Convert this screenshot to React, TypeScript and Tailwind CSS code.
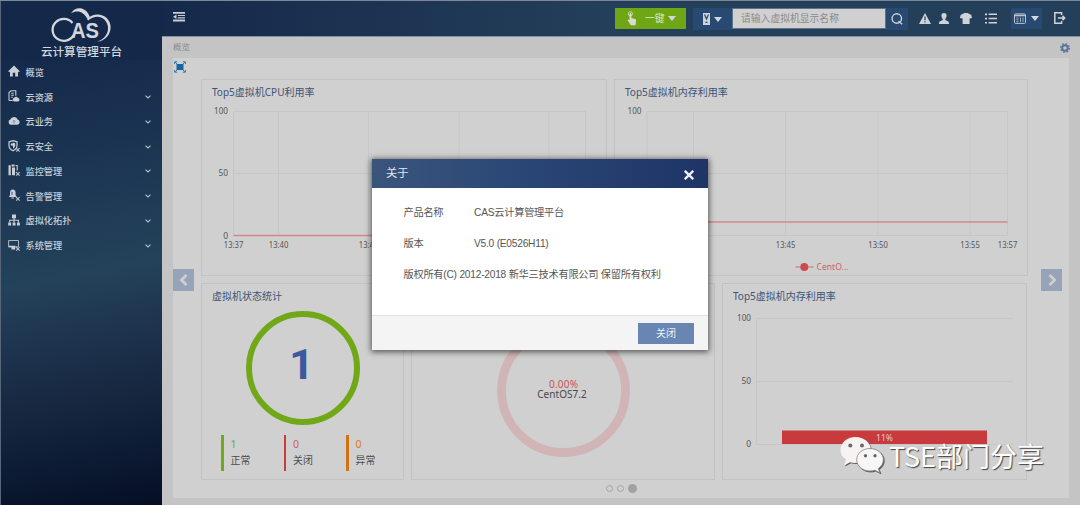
import type { ReactNode } from 'react';

const menuItems = [
  { label: '概览', icon: 'home', expandable: false },
  { label: '云资源', icon: 'resource', expandable: true },
  { label: '云业务', icon: 'cloud', expandable: true },
  { label: '云安全', icon: 'shield', expandable: true },
  { label: '监控管理', icon: 'monitor', expandable: true },
  { label: '告警管理', icon: 'alarm', expandable: true },
  { label: '虚拟化拓扑', icon: 'topology', expandable: true },
  { label: '系统管理', icon: 'system', expandable: true },
];

const vmStates = [
  { label: '正常', count: 1, bar: 'bg-[#70a818]', text: 'text-[#74ab20]' },
  { label: '关闭', count: 0, bar: 'bg-[#c83c3e]', text: 'text-[#cf5a5c]' },
  { label: '异常', count: 0, bar: 'bg-[#d07216]', text: 'text-[#d67c22]' },
];

const wrench = <path d="M8 8l3.6 3.6M11.6 8.2L8.2 11.6" stroke="#b9c2cc" strokeWidth="1.1" fill="none" />;

const menuIcons: Record<string, ReactNode> = {
  home: <path d="M6 .5L.2 6.2l1 1 .8-.7V11.600h2.800V7.800h2.400v3.800H10V6.500l.8.7 1-1z" />,
  resource: (
    <>
      <path d="M1 10.500V2.500L3 .8h4.800v5M3.200 3.200h2.600M3.200 5.200h2.600M3.200 7.200h1.600M1 10.500h3.600" fill="none" stroke="#c6cdd5" strokeWidth="1.100" />
      <path d="M6 11.400a1.700 1.700 0 0 1 0-3.300 2.200 2.200 0 0 1 4-.2 1.800 1.800 0 0 1 .3 3.500z" />
    </>
  ),
  cloud: (
    <>
      <path d="M3 9.800A2.700 2.700 0 0 1 2.300 4.600 3.900 3.900 0 0 1 9.600 4.400 2.750 2.750 0 0 1 9.300 9.800z" />
      <path d="M6 8.800V5.500M4.700 6.700L6 5.400l1.300 1.300" stroke="#7d8c9d" strokeWidth=".9" fill="none" />
    </>
  ),
  shield: (
    <>
      <path d="M1 1.800L5 .7l4 1.100v4c0 2.400-1.800 4-4 5-2.200-1-4-2.600-4-5z" fill="none" stroke="#c6cdd5" strokeWidth="1.200" />
      <path d="M5 2.600l2.200.8v2.200C7.200 7 6.200 8 5 8.800z" />
      <circle cx="4" cy="4.500" r="1.300" />
      {wrench}
    </>
  ),
  monitor: (
    <>
      <path d="M.5 1.200h2.300v10H.5zM4 3.500h3v7.700H4zM3.600.5h3v1.900h-3z" />
      <path d="M7.600 1.500h1.600v5" fill="none" stroke="#c6cdd5" strokeWidth="1.100" />
      {wrench}
    </>
  ),
  alarm: (
    <>
      <path d="M4.800.6c2 0 2.800 1.500 2.800 3.300v2.300L8.800 8H.8L2 6.200V3.900C2 2.100 2.800.6 4.800.6zM3.400 8.600h2.600v1H3.400z" />
      <path d="M4 2.800v3" stroke="#1c3654" strokeWidth=".8" />
      {wrench}
    </>
  ),
  topology: (
    <>
      <path d="M4 .4h4v3.800H4zM.2 8.400h2.900v3.200H.2zM4.600 8.400h2.900v3.200H4.600zM9 8.400h2.900v3.200H9z" />
      <path d="M6 4v4.500M1.700 8.500V6.200h8.700v2.300" fill="none" stroke="#c6cdd5" strokeWidth="1.100" />
    </>
  ),
  system: (
    <>
      <path d="M.6 1.500h9.900v6.300H.6z" fill="none" stroke="#aab5c1" strokeWidth="1" />
      <path d="M.6 6.800h6.600v1.400H.6zM3.500 8.200h3.700v2.300H3.500z" />
      {wrench}
    </>
  ),
};

function Logo() {
  return (
    <div className="flex h-[59px] flex-col items-center bg-[#14294a]">
      <svg width="162" height="44" viewBox="1 1 162 44" className="block shrink-0" fill="#d3d7dc">
        <path d="M72.500 23A11.200 10.900 0 1 0 73.500 35.300" fill="none" stroke="#d3d7dc" strokeWidth="2.300" />
        <path d="M71 13.300C75 6.500 85.500 5.500 90 17.200L87.200 18.800C84 12 77.500 9.600 71 13.300z" />
        <path d="M86.800 19C97 9.500 110.500 16 110.600 27C110.700 35 105 41 97 41.600C104 39.500 108.300 34 108 27.500C107.500 18 97 12.500 88.300 20.500z" />
        <text x="71" y="37.500" fontFamily="Liberation Sans, Arial, sans-serif" fontSize="21.500" fontWeight="700" textLength="28" lengthAdjust="spacingAndGlyphs">
          AS
        </text>
      </svg>
      <div className="text-[11.600px] leading-[13px] font-medium whitespace-nowrap text-[#d3d7dc]">云计算管理平台</div>
    </div>
  );
}

function Sidebar() {
  return (
    <aside className="flex w-[162px] shrink-0 flex-col border-l border-[#56677b] bg-[linear-gradient(169deg,#15294a_10%,#1a3351_30%,#24425a_54%,#1e334e_66%,#16273f_78%,#0d1c35_88%,#050e24_100%)]">
      <Logo />
      <nav className="flex flex-col">
        {menuItems.map((item) => (
          <div key={item.label} className="flex h-[24.750px] items-center pr-[11px] pl-[7px] text-[#c8ced6]">
            <svg width="12" height="12" viewBox="0 0 12 12" fill="#c9cfd6" className="mb-[2px] shrink-0">
              {menuIcons[item.icon]}
            </svg>
            <span className="ml-[5.500px] flex-1 text-[9.200px] leading-none font-medium">{item.label}</span>
            {item.expandable && (
              <svg width="6" height="4" viewBox="0 0 6 4" fill="none" stroke="#b5bfc9" strokeWidth="1.100">
                <path d="M.5.7L3 3 5.500.7" />
              </svg>
            )}
          </div>
        ))}
      </nav>
    </aside>
  );
}

function Caret() {
  return (
    <svg width="8" height="5" viewBox="0 0 8 5" fill="#d3d7dc">
      <path d="M0 0h8L4 5z" />
    </svg>
  );
}

function Header() {
  return (
    <header className="flex h-[36px] shrink-0 items-start border-b border-[#84919e] bg-[linear-gradient(90deg,#15294a,#1c3452_25%,#243f59_48%,#243f59)] pt-[7px] pl-[11px]">
      <svg width="12" height="10" viewBox="0 0 12 10" fill="#c5ccd4" className="mt-[4px]">
        <path d="M0 0h12v1.800H0zM4.800 2.900H12v1.200H4.800zM4.800 5.200H12v1.200H4.800zM0 7.600h12v1.800H0zM0 4.700l3.500-2.300v4.600z" />
      </svg>
      <button className="ml-[430px] flex h-[21px] w-[71px] items-center bg-[#6fa616] pl-[12px] text-[9.800px] text-[#dbe6c8]">
        <svg width="10" height="15" viewBox="0 0 10 15" fill="#d8dccf">
          <circle cx="3.400" cy="2.800" r="2.100" fill="none" stroke="#c8d8a4" strokeWidth="1" />
          <path d="M2.500 3c0-1.200 1.900-1.200 1.900 0v4l3.600 1c.9.3 1.200.8 1.100 1.700l-.6 4.600H3.800L1 9.800c-.6-1 .6-1.600 1.500-.7z" />
        </svg>
        <span className="mr-[3px] ml-[8px] leading-none">一键</span>
        <Caret />
      </button>
      <button className="ml-[7px] flex h-[22px] w-[39px] items-center gap-[4px] bg-[#284972] pl-[10px]">
        <svg width="7" height="12" viewBox="0 0 7 12">
          <path d="M0 0h7v12H0z" fill="#ced3d9" />
          <path d="M1.500 1.500L3.500 6l2-4.500M3.500 5.500v1.500M2.500 9.300h2" fill="none" stroke="#284972" strokeWidth="1.200" />
        </svg>
        <Caret />
      </button>
      <div className="flex h-[21px] w-[154px] items-center border border-[#5c738d] bg-[#d0d0d0] pl-[8px] text-[9.800px] leading-none text-[#8b8b8b]">
        请输入虚拟机显示名称
      </div>
      <button className="flex h-[22px] w-[22px] items-center justify-center bg-[#284972]">
        <svg width="12" height="12" viewBox="0 0 12 12" fill="none" stroke="#ced3d9" strokeWidth="1.400">
          <circle cx="5.800" cy="5.500" r="4.700" />
          <path d="M7.300 8.300l3.900 2.900" />
        </svg>
      </button>
      <div className="-mt-px flex h-[22px] items-center text-[#ced3d9]">
        <svg width="12" height="11" viewBox="0 0 12 11" className="ml-[11px]" fill="currentColor">
          <path d="M6 0l6 11H0z" />
          <path d="M6 3.600v3.700M6 8.300v1.300" stroke="#243f59" strokeWidth="1.200" />
        </svg>
        <svg width="10" height="11" viewBox="0 0 10 11" className="ml-[8px]" fill="currentColor">
          <path d="M5 0c1.800 0 2.700 1.200 2.600 2.800-.1 1.400-.6 2.500-1.300 3.100v1L9.400 8.500c.5.300.6 1.500.6 2.500H0C0 10 .1 8.800.6 8.500l3.100-1.600v-1C3 5.300 2.500 4.200 2.400 2.800 2.300 1.200 3.200 0 5 0z" />
        </svg>
        <svg width="12" height="11" viewBox="0 0 12 11" className="ml-[11px]" fill="currentColor">
          <path d="M3.400.4C4.500 0 7.500 0 8.600.4l2.700 1.700.7 2.800-2.400.6v5.500H2.600V5.500L0 4.900l.6-2.800z" />
        </svg>
        <svg width="12" height="11" viewBox="0 0 12 11" className="ml-[13px]" fill="currentColor">
          <path d="M0 .5h2v1.700H0zM3.600.5H12v1.500H3.600zM0 4.700h2v1.700H0zM3.600 4.700H12v1.500H3.600zM0 8.900h2v1.700H0zM3.600 8.900H12v1.500H3.600z" />
        </svg>
        <button className="mt-px ml-[14px] flex h-[21px] w-[31px] items-center gap-[5px] self-start rounded-[1px] bg-[#284972] pl-[3px]">
          <svg width="12" height="11" viewBox="0 0 12 11" fill="none" stroke="#b9c3cf">
            <rect x=".5" y=".9" width="11" height="9.500" rx="1" />
            <path d="M1 2.500h10" strokeWidth="1.600" />
            <path d="M2.300 5h2.200M2.300 6.800h2.200M2.300 8.600h2.200M6.500 4.500V9M9 4.500V9" strokeWidth=".8" />
          </svg>
          <Caret />
        </button>
        <svg width="12" height="12" viewBox="0 0 12 12" className="ml-[12px]" fill="none" stroke="currentColor" strokeWidth="1.500">
          <path d="M7.600 3V.8H.8v10.400h6.800V9M4 6h6.500M8.500 3.900L10.700 6 8.500 8.100" />
        </svg>
      </div>
    </header>
  );
}

function Card({ title, className, children }: { title?: string; className: string; children?: ReactNode }) {
  return (
    <section className={`flex shrink-0 flex-col overflow-hidden border border-[#c3c3c3] ${className}`}>
      <h3 className="h-[24px] shrink-0 pl-[10px] text-[10px] leading-[24px] whitespace-nowrap text-[#3d5475]">{title}</h3>
      {children}
    </section>
  );
}

type LineChartProps = {
  left: number;
  right: number;
  ticks: { x: number; label: string }[];
  lineY: number;
  children?: ReactNode;
};

function LineChart({ left, right, ticks, lineY, children }: LineChartProps) {
  return (
    <svg width="412" height="170" viewBox="0 0 412 170" className="block shrink-0" fontFamily="Noto Sans, sans-serif" fontSize="8.500">
      <g stroke="#c6c6c6" strokeWidth="1">
        {[7.5, 69.500, 131.500].map((y) => (
          <path key={y} d={`M${left} ${y}H${right}`} />
        ))}
        {ticks.map((t) => (
          <path key={t.x} d={`M${t.x} 7.500V131.500`} />
        ))}
      </g>
      <g fill="#565656">
        <text x={left - 19.500} y="10" textLength="14" lengthAdjust="spacingAndGlyphs">100</text>
        <text x={left - 15} y="72" textLength="9.500" lengthAdjust="spacingAndGlyphs">50</text>
        <text x={left - 10.300} y="134.500">0</text>
      </g>
      <g fill="#565656">
        {ticks.filter((t) => t.label).map((t) => (
          <text key={t.x} x={t.x - 9.700} y="144" textLength="19.500" lengthAdjust="spacingAndGlyphs">
            {t.label}
          </text>
        ))}
      </g>
      <rect x={left} y={lineY - 0.7} width={right - left} height="1.400" fill="#d98283" />
      {children}
    </svg>
  );
}

const cpuTicks = [
  { x: 31.500, label: '13:37' },
  { x: 76.500, label: '13:40' },
  { x: 166.500, label: '13:45' },
  { x: 257, label: '' },
  { x: 347, label: '' },
  { x: 383.500, label: '' },
];

const memoryTicks = [
  { x: 32, label: '' },
  { x: 78.500, label: '' },
  { x: 170.500, label: '13:45' },
  { x: 263, label: '13:50' },
  { x: 355, label: '13:55' },
  { x: 392.500, label: '13:57' },
];

function VmStates() {
  return (
    <>
      <div className="mt-[3px] ml-[43.500px] flex h-[114px] w-[114px] shrink-0 items-center justify-center rounded-full border-[6.500px] border-[#70a818] pb-[8px] font-['Roboto',sans-serif] text-[43px] leading-none font-bold text-[#3a5a9d]">
        <span className="-ml-[2px]">1</span>
      </div>
      <div className="mt-[10px] ml-[19px] flex">
        {vmStates.map((s) => (
          <div key={s.label} className="flex w-[62.500px] shrink-0 gap-[7px]">
            <div className={`h-[36px] w-[2.500px] ${s.bar}`} />
            <div className="pt-[2px]">
              <div className={`text-[10.500px] leading-[14px] ${s.text}`}>{s.count}</div>
              <div className="text-[9.900px] leading-[18px] text-[#4c4c4c]">{s.label}</div>
            </div>
          </div>
        ))}
      </div>
    </>
  );
}

function Arrow({ direction }: { direction: 'left' | 'right' }) {
  return (
    <button className="flex h-[22px] w-[21px] items-center justify-center bg-[#96a3b8]">
      <svg width="10" height="12" viewBox="0 0 10 12" fill="none" stroke="#cfcfcf" strokeWidth="2.800">
        <path d={direction === 'left' ? 'M7.500 1L2.500 6l5 5' : 'M2.500 1l5 5-5 5'} />
      </svg>
    </button>
  );
}

function Dashboard() {
  return (
    <div className="mr-[11px] ml-[11px] flex h-[440px] shrink-0 bg-[#d0d0d0]">
      <div className="flex w-[28px] shrink-0 flex-col">
        <svg width="12" height="12" viewBox="0 0 12 12" className="mt-[3px] ml-[1px]" fill="#1466a0">
          <path d="M2.500 3h7v6h-7z" />
          <path d="M.6 3V.8h2.600M8.800.8h2.600V3M11.400 9v2.200H8.800M3.200 11.200H.6V9M1 1l2 2M11 1L9 3M1 11l2-2M11 11L9 9" fill="none" stroke="#2f7db2" strokeWidth="1" />
        </svg>
        <div className="mt-[196px]">
          <Arrow direction="left" />
        </div>
      </div>
      <div className="flex w-[827px] shrink-0 flex-col pt-[21px]">
        <div className="flex gap-[7px]">
          <Card title="Top5虚拟机CPU利用率" className="h-[197px] w-[406px]">
            <LineChart left={31.500} right={383.500} ticks={cpuTicks} lineY={131.500} />
          </Card>
          <Card title="Top5虚拟机内存利用率" className="h-[197px] w-[414px]">
            <LineChart left={32} right={392.500} ticks={memoryTicks} lineY={118}>
              <path d="M180.500 163h18" stroke="#d06a6b" strokeWidth="1" />
              <circle cx="189.300" cy="163" r="4" fill="#cb4c4e" />
              <text x="201.500" y="165.500" fill="#cf6163" textLength="32">CentO...</text>
            </LineChart>
          </Card>
        </div>
        <div className="mt-[7px] flex gap-[7px]">
          <Card title="虚拟机状态统计" className="h-[197px] w-[203px]">
            <VmStates />
          </Card>
          <Card className="h-[197px] w-[304px]">
            <svg width="302" height="171" viewBox="0 0 302 171" className="block shrink-0" fontFamily="Noto Sans, sans-serif" textAnchor="middle">
              <circle cx="151.500" cy="82.500" r="62" fill="none" stroke="#d1b5b6" strokeWidth="8.800" />
              <text x="151.500" y="79.500" fontSize="10" fill="#cb5456" textLength="29">0.00%</text>
              <text x="150" y="89.500" fontSize="10" fill="#484848" textLength="49.500">CentOS7.2</text>
            </svg>
          </Card>
          <Card title="Top5虚拟机内存利用率" className="h-[197px] w-[305px]">
            <svg width="303" height="171" viewBox="0 0 303 171" className="block shrink-0" fontFamily="Noto Sans, sans-serif" fontSize="8.500" fill="#565656">
              <path d="M33.500 10.500H290M33.500 73.500H290M33.500 136.500H290M33.500 10.500V136.500" fill="none" stroke="#c6c6c6" />
              <text x="14" y="13" textLength="14" lengthAdjust="spacingAndGlyphs">100</text>
              <text x="18.500" y="76" textLength="9.500" lengthAdjust="spacingAndGlyphs">50</text>
              <text x="23.200" y="139">0</text>
              <path d="M59 122.500h205V136H59z" fill="#c83a3b" />
              <text x="153" y="133" fill="#e2cccc" textLength="17" lengthAdjust="spacingAndGlyphs">11%</text>
            </svg>
          </Card>
        </div>
        <div className="mt-[4px] ml-[405px] flex items-center gap-[4px]">
          <i className="block size-[7px] rounded-full border-[1.500px] border-[#a5a5a5]" />
          <i className="block size-[7px] rounded-full border-[1.500px] border-[#a5a5a5]" />
          <i className="block size-[9px] rounded-full bg-[#a2a2a2]" />
        </div>
      </div>
      <div className="pt-[211px] pl-[13px]">
        <Arrow direction="right" />
      </div>
    </div>
  );
}

function AboutDialog() {
  return (
    <div className="absolute top-[158px] left-[372px] flex h-[191px] w-[336px] flex-col bg-white shadow-[0_1px_6px_1px_rgba(0,0,0,0.6)]">
      <div className="flex h-[29px] shrink-0 items-center justify-between bg-[linear-gradient(90deg,#3a557c,#2a4675_45%,#1e3566)] pr-[14px] pl-[14px] text-[11.300px] text-[#e4e8ee]">
        <span>关于</span>
        <svg width="10" height="10" viewBox="0 0 10 10" stroke="#eef0f4" strokeWidth="2.300" className="mt-[3px]">
          <path d="M.8.8l8.400 8.400M9.200.8L.8 9.200" />
        </svg>
      </div>
      <div className="flex flex-1 flex-col gap-[17px] pt-[18px] pl-[31.500px] font-['Liberation_Sans','Noto_Sans_CJK_SC',sans-serif] text-[10.200px] leading-[14px] tracking-[-0.230px] whitespace-nowrap text-[#555]">
        <div className="flex">
          <span className="w-[70.500px]">产品名称</span>
          <span>CAS云计算管理平台</span>
        </div>
        <div className="flex">
          <span className="w-[70.500px]">版本</span>
          <span>V5.0 (E0526H11)</span>
        </div>
        <div>版权所有(C) 2012-2018 新华三技术有限公司 保留所有权利</div>
      </div>
      <div className="flex h-[35px] shrink-0 items-center justify-end border-t border-[#dfe1ea] bg-[#f4f4f4] pr-[14px]">
        <button className="h-[21px] w-[56px] bg-[#6986b3] text-[10px] leading-none text-[#edf1f6]">关闭</button>
      </div>
    </div>
  );
}

function Watermark() {
  return (
    <div className="absolute top-[433px] left-[838px] flex">
      <svg width="51" height="42" viewBox="0 0 51 42" className="drop-shadow-[1px_1px_0.5px_rgba(60,60,60,0.8)]">
        <path d="M17.500 3C9 3 2.500 8.700 2.500 16c0 4 2 7.500 5.300 10l-1.700 5.500 6-3.300c1.700.5 3.500.8 5.400.8C26 29 33 23.300 33 16S26 3 17.500 3z" fill="#f8f3f3" />
        <path d="M32 14.500c-7.500 0-13.300 5-13.300 11.200S24.500 37 32 37c1.700 0 3.300-.3 4.800-.8l5 2.500-1.500-4.200c3.100-2 5-5.200 5-8.800 0-6.200-5.800-11.200-13.300-11.200z" fill="#f7f7f7" stroke="#8a8282" strokeWidth=".8" />
        <g fill="#6c6868">
          <circle cx="12.300" cy="11.500" r="2" />
          <circle cx="24" cy="11.500" r="2" />
          <circle cx="27.500" cy="21.800" r="1.700" />
          <circle cx="37" cy="21.800" r="1.700" />
        </g>
      </svg>
      <span className="mt-[4px] font-['Noto_Sans_CJK_SC',sans-serif] text-[27px] leading-[36px] whitespace-nowrap text-white [text-shadow:1px_1px_1px_rgba(50,50,50,0.9)]">
        TSE部门分享
      </span>
    </div>
  );
}

export default function App() {
  return (
    <div className="relative flex h-[505px] w-[1080px] overflow-hidden border-t border-[#7b8997] font-['Noto_Sans','Noto_Sans_CJK_SC',sans-serif]">
      <Sidebar />
      <div className="flex min-w-0 flex-1 flex-col bg-[#c4c4c4]">
        <Header />
        <div className="flex h-[21px] shrink-0 items-center justify-between pr-[10px] pl-[11px]">
          <span className="text-[8.500px] leading-none text-[#8c8c8c]">概览</span>
          <svg width="10" height="10" viewBox="0 0 10 10" fill="none" stroke="#5a749f">
            <circle cx="5" cy="5" r="2.800" strokeWidth="2" />
            <circle cx="5" cy="5" r="4.300" strokeWidth="1.400" strokeDasharray="1.700 1.677" />
          </svg>
        </div>
        <Dashboard />
      </div>
      <AboutDialog />
      <Watermark />
    </div>
  );
}
